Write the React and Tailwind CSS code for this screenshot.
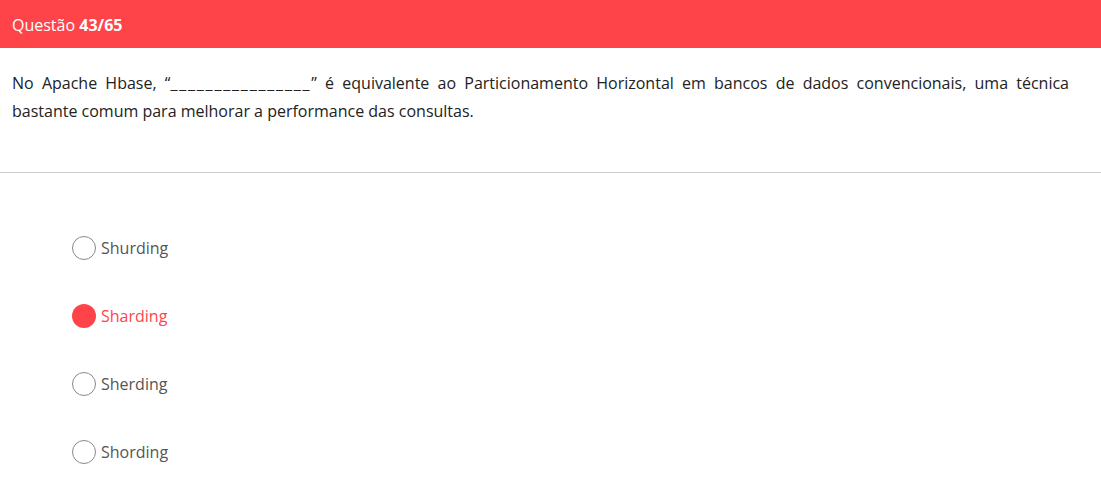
import React from "react";

const options = [
  { label: "Shurding", selected: false },
  { label: "Sharding", selected: true },
  { label: "Sherding", selected: false },
  { label: "Shording", selected: false },
];

export default function App() {
  return (
    <div className="w-[1101px] h-[486px] bg-white overflow-hidden" style={{ fontFamily: '"Open Sans", "Noto Sans", sans-serif' }}>
      <div className="h-[48px] bg-[#ff4449] flex items-center pl-3 pt-[1px] text-white text-[16px]">
        <span>Questão&nbsp;</span>
        <span className="font-bold">43/65</span>
      </div>
      <div className="pt-[21px] pb-[47px] pl-3 pr-[32px] text-[16px] leading-[28px] text-[#222] text-justify">
        No Apache Hbase, “<span className="tracking-[1.8px]">________________</span>” é equivalente ao Particionamento Horizontal em bancos de dados convencionais, uma técnica bastante comum para melhorar a performance das consultas.
      </div>
      <div className="h-px bg-[#cccccc]" />
      <div className="mt-[63px] pl-[72px] flex flex-col gap-[44px]">
        {options.map((o) => (
          <div key={o.label} className="flex items-center h-[24px]">
            {o.selected ? (
              <div className="w-[24px] h-[24px] rounded-full bg-[#ff4449]" />
            ) : (
              <div className="w-[24px] h-[24px] rounded-full border border-[#888]" />
            )}
            <span className={`ml-[5px] text-[16px] ${o.selected ? "text-[#ff4449]" : "text-[#555]"}`}>{o.label}</span>
          </div>
        ))}
      </div>
    </div>
  );
}
